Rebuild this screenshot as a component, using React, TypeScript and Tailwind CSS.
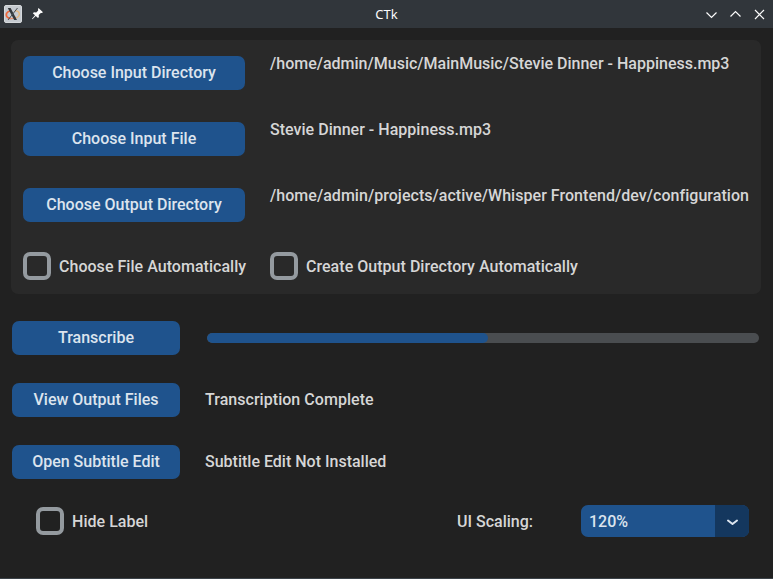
import type { ReactNode } from "react";

function Label({ children, className = "" }: { children: ReactNode; className?: string }) {
  return <span className={`block h-5 leading-5 whitespace-nowrap ${className}`}>{children}</span>;
}

function Button({ children, className = "w-[168px]" }: { children: ReactNode; className?: string }) {
  return (
    <button className={`flex h-[34px] shrink-0 items-center justify-center rounded-[7px] bg-[#1f538d] pb-px text-[#dce4ee] ${className}`}>
      <Label>{children}</Label>
    </button>
  );
}

function Checkbox({ children, className = "" }: { children: ReactNode; className?: string }) {
  return (
    <label className={`flex items-center ${className}`}>
      <span className="mr-2 size-7 shrink-0 rounded-[7px] border-4 border-[#949a9f]" />
      <Label className="mt-[2px] tracking-[0.03px]">{children}</Label>
    </label>
  );
}

function PathRow({ action, value, valueClass = "" }: { action: string; value: string; valueClass?: string }) {
  return (
    <div className="flex h-[34px] items-start">
      <Button className="mr-[25px] w-[222px]">{action}</Button>
      <Label className={`-mt-[2px] ${valueClass}`}>{value}</Label>
    </div>
  );
}

function TitleBar() {
  return (
    <header className="grid h-7 grid-cols-3 items-center bg-[#31363b] text-[#fcfcfc]">
      <div className="flex items-center pl-1">
        <svg width="18" height="18" viewBox="0 0 18 18">
          <rect x="0.5" y="0.5" width="17" height="17" rx="1.5" fill="#c5cad0" stroke="#d5d9dc" />
          <path d="M6 6C1 7.500 1 12.500 6.500 13.500" fill="none" stroke="#f0683a" strokeWidth="1.800" />
          <path d="M6.500 13.500C9 13.800 11 13 12 12" fill="none" stroke="#e8916c" strokeWidth="1.200" />
          <path d="M11 5.600C16 6 17 10.500 12.500 13" fill="none" stroke="#e3b77f" strokeWidth="1.400" />
          <path d="M3.800 3h2.800l6.400 12h-2.800z" fill="#33383b" />
          <path d="M13.500 3L4 15" stroke="#4a4f53" strokeWidth="1" />
        </svg>
        <svg className="ml-[10px]" width="11" height="12" viewBox="0 0 11 12">
          <path d="M6.500 0L11 4.300L9.800 5L8.800 4.900L6.700 7L6.900 9L6 10L3.700 7.900L.5 11.200L0 10.700L3 7.300L.8 5.200L2 4.200L4.200 4.400L6.200 2.400L6 1z" fill="#fcfcfc" />
        </svg>
      </div>
      <span className="text-center font-['Noto_Sans'] text-[13px] leading-5 font-normal">CTk</span>
      <div className="flex items-center justify-end gap-[13px] pr-2">
        {["M.5 3.500L5.500 8.500L10.500 3.500", "M.5 7.500L5.500 2.500L10.500 7.500", "M1 1L10 10M10 1L1 10"].map((d) => (
          <svg key={d} width="11" height="11" viewBox="0 0 11 11" fill="none" stroke="#fcfcfc" strokeWidth="1.200">
            <path d={d} />
          </svg>
        ))}
      </div>
    </header>
  );
}

export default function App() {
  return (
    <div className="flex h-[579px] w-[773px] flex-col overflow-hidden border-b border-[#3b4248] bg-[#212121] font-[Roboto,sans-serif] text-[16px] font-medium text-[#d6d6d6]">
      <TitleBar />
      <main className="flex flex-col">
        <section className="mt-3 ml-[11px] flex h-[254px] w-[750px] flex-col rounded-[7px] bg-[#292929] px-3 pt-4">
          <div className="flex flex-col gap-8">
            <PathRow action="Choose Input Directory" value="/home/admin/Music/MainMusic/Stevie Dinner - Happiness.mp3" />
            <PathRow action="Choose Input File" value="Stevie Dinner - Happiness.mp3" valueClass="tracking-[0.02px]" />
            <PathRow action="Choose Output Directory" value="/home/admin/projects/active/Whisper Frontend/dev/configuration" valueClass="tracking-[0.036px]" />
          </div>
          <div className="mt-[30px] flex">
            <Checkbox className="w-[247px]">Choose File Automatically</Checkbox>
            <Checkbox>Create Output Directory Automatically</Checkbox>
          </div>
        </section>
        <section className="mt-[27px] flex flex-col gap-7 pl-3">
          <div className="flex items-center">
            <Button>Transcribe</Button>
            <div className="ml-[27px] h-[10px] w-[552px] overflow-hidden rounded-[5px] bg-[#4a4d50]">
              <div className="h-full w-[281px] rounded-[5px] bg-[#1f538d]" />
            </div>
          </div>
          <div className="flex items-center">
            <Button>View Output Files</Button>
            <Label className="ml-[25px] tracking-[0.04px]">Transcription Complete</Label>
          </div>
          <div className="flex items-center">
            <Button>Open Subtitle Edit</Button>
            <Label className="ml-[25px]">Subtitle Edit Not Installed</Label>
          </div>
        </section>
        <section className="mt-[26px] flex h-8 items-center pl-9">
          <Checkbox className="w-[421px]">Hide Label</Checkbox>
          <Label className="mt-[2px] w-[124px]">UI Scaling:</Label>
          <button className="flex h-8 w-[168px] overflow-hidden rounded-[7px] bg-[#1f538d] text-[#dce4ee]">
            <span className="flex w-[134px] items-center pt-[2px] pl-2">
              <Label>120%</Label>
            </span>
            <span className="flex w-[34px] items-center justify-center bg-[#14375e] pt-[3px] pl-px">
              <svg width="13" height="7" viewBox="0 0 13 7" fill="none" stroke="#dce4ee" strokeWidth="2" strokeLinecap="round" strokeLinejoin="round">
                <path d="M2 1.500L6.500 5L11 1.500" />
              </svg>
            </span>
          </button>
        </section>
      </main>
    </div>
  );
}
